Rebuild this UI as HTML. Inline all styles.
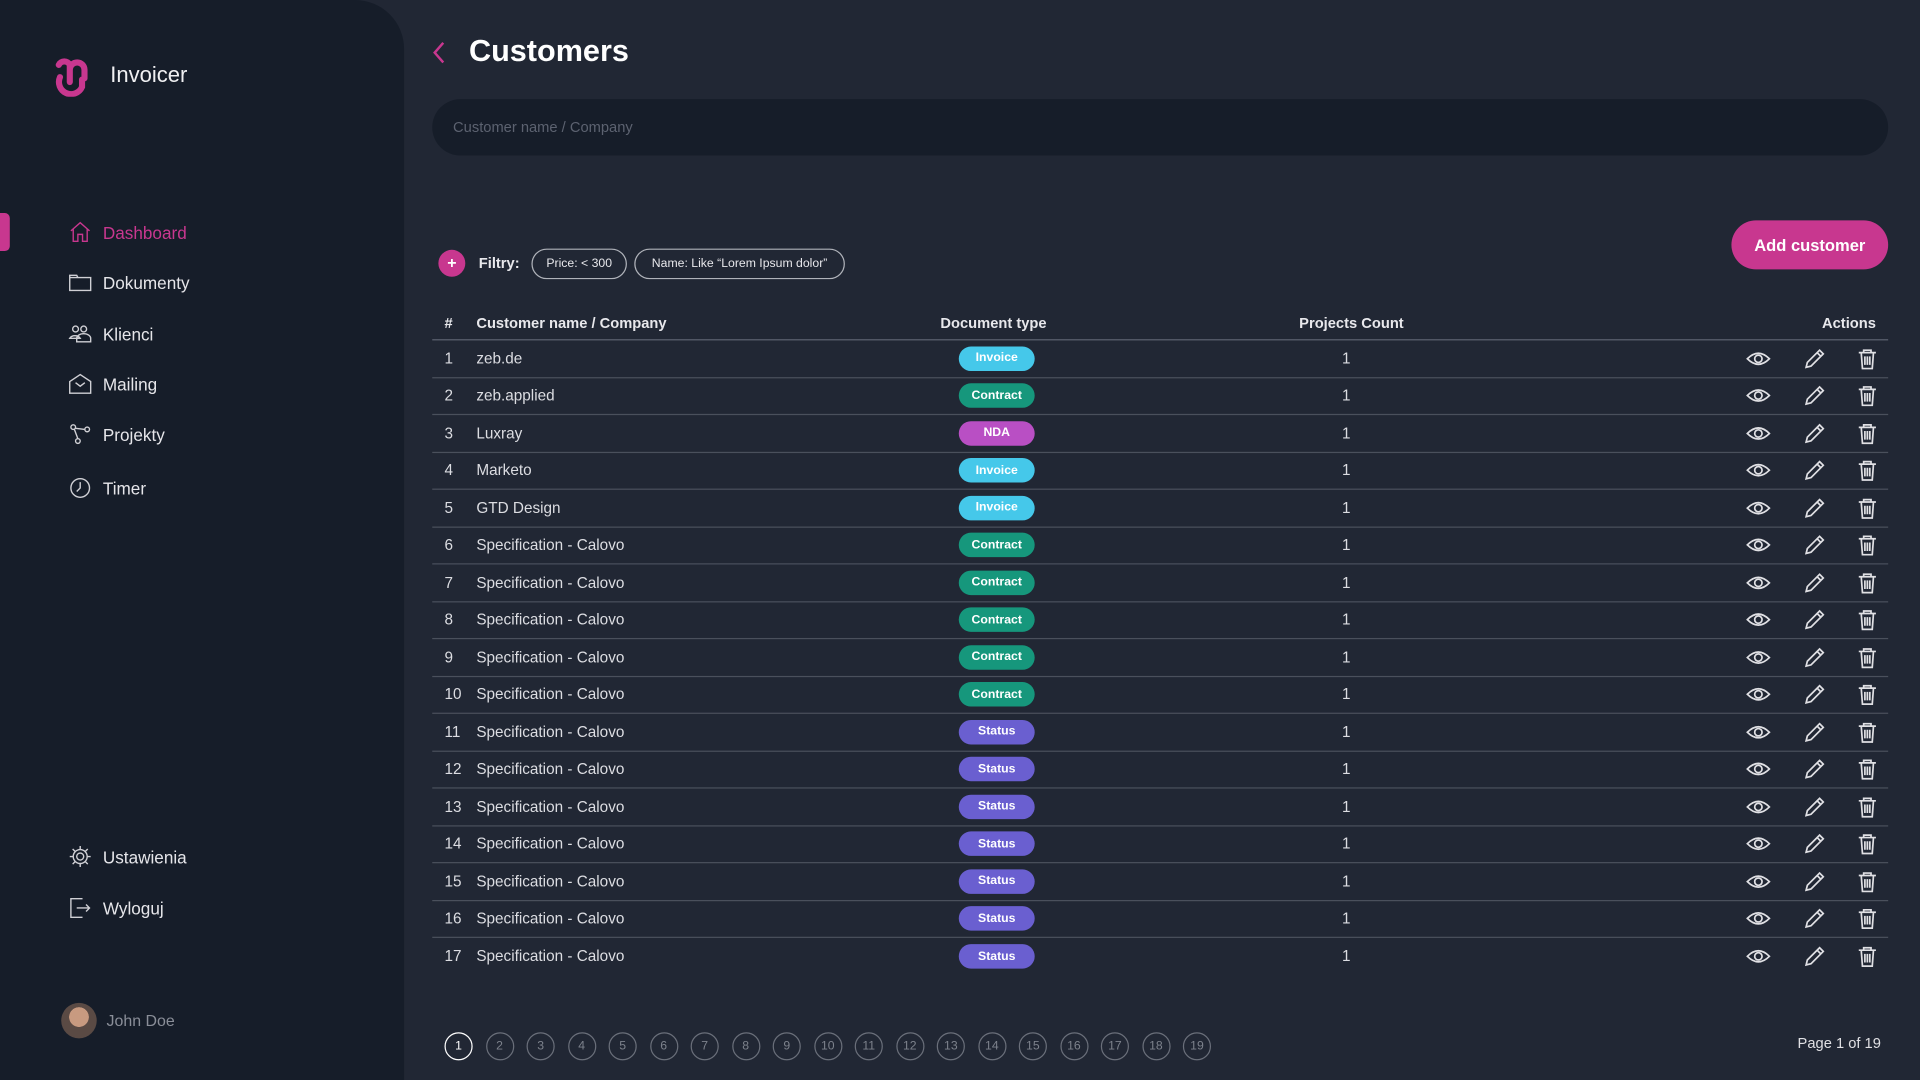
<!DOCTYPE html>
<html><head><meta charset="utf-8"><style>
*{box-sizing:border-box;margin:0;padding:0}
html,body{width:1920px;height:1080px;overflow:hidden;background:#212734}
#w{position:absolute;left:0;top:0;width:1568px;height:882px;transform:scale(1.22449);transform-origin:0 0;font-family:"Liberation Sans",sans-serif;color:#e8e8ec;background:#212734}
.sb{position:absolute;left:0;top:0;width:330px;height:882px;background:#161d29;border-top-right-radius:40px}
.nav{position:absolute;left:56px;display:flex;align-items:center;font-size:14px;color:#e6e6ea}
.nav svg{width:19px;height:19px;margin-right:9px;fill:none;stroke:#d0d0d5;stroke-width:1.2}
.t{position:absolute;left:353px;top:250px;width:1189px}
.hd{height:28px;position:relative;font-size:12px;font-weight:bold;border-bottom:1px solid #5c6270}
.row{height:30.5px;position:relative;border-bottom:1px solid #4a505c;font-size:12.5px;color:#dcdde2}
.row:last-child{border-bottom:none}
.row>span,.hd>span{position:absolute;top:50%;transform:translateY(-50%)}
.row>span.b{left:430px;width:62px;height:20px;border-radius:10px;font-size:10px;font-weight:bold;color:#fff;display:flex;align-items:center;justify-content:center}
.ic{width:20px;height:20px;fill:none;stroke:#e0e0e4;stroke-width:1.4}
.pg{position:absolute;top:843px;width:23px;height:23px;border-radius:50%;border:1px solid #6a6f7a;color:#7d828c;font-size:10px;display:flex;align-items:center;justify-content:center}
</style></head><body><div id="w">
<div class="sb">
<svg style="position:absolute;left:44px;top:45px" width="32" height="34" viewBox="0 0 32 34"><path d="M4 8 a5 5 0 0 1 9 0 V22 M13 12 a6 6 0 0 1 12 0 V19 M5 18 a9 9 0 0 0 18 8 V20" fill="none" stroke="#c8378f" stroke-width="5" stroke-linecap="round"/></svg>
<div style="position:absolute;left:90px;top:51px;font-size:18px;color:#f0f0f2">Invoicer</div>
<div style="position:absolute;left:0;top:174px;width:8px;height:31px;background:#c8378f;border-radius:0 4px 4px 0"></div>
<div class="nav" style="top:180px;color:#c8378f"><svg viewBox="0 0 20 20" style="stroke:#c8378f"><path d="M2 9 L10 2 L18 9 M4 7 V18 H8 V12 H12 V18 H16 V7"/></svg>Dashboard</div>
<div class="nav" style="top:221px"><svg viewBox="0 0 20 20"><path d="M1 4 H7 L8 6 H19 V17 H1 Z M1 6 H19"/></svg>Dokumenty</div>
<div class="nav" style="top:263px"><svg viewBox="0 0 20 20"><circle cx="6" cy="6" r="2.5"/><circle cx="13" cy="6" r="2.5"/><path d="M1 14 a5 4 0 0 1 9 0 Z M7 17 V14 a6 4 0 0 1 12 0 V17 Z"/></svg>Klienci</div>
<div class="nav" style="top:304px"><svg viewBox="0 0 20 20"><path d="M1 8 L10 2 L19 8 V18 H1 Z M6 9 L10 12 L14 9"/></svg>Mailing</div>
<div class="nav" style="top:345px"><svg viewBox="0 0 20 20"><circle cx="4" cy="4" r="2"/><circle cx="16" cy="6" r="2"/><circle cx="8" cy="16" r="2"/><path d="M6 5 L14 6 M5 6 L8 14"/></svg>Projekty</div>
<div class="nav" style="top:389px"><svg viewBox="0 0 20 20"><circle cx="10" cy="10" r="8"/><path d="M10 5 V10 L7 13"/></svg>Timer</div>
<div class="nav" style="top:690px"><svg viewBox="0 0 20 20"><circle cx="10" cy="10" r="3"/><path d="M10 1 V4 M10 16 V19 M1 10 H4 M16 10 H19 M3.5 3.5 L5.5 5.5 M14.5 14.5 L16.5 16.5 M3.5 16.5 L5.5 14.5 M14.5 5.5 L16.5 3.5"/><circle cx="10" cy="10" r="6"/></svg>Ustawienia</div>
<div class="nav" style="top:732px"><svg viewBox="0 0 20 20"><path d="M12 2 H2 V18 H12 M7 10 H18 M15 7 L18 10 L15 13"/></svg>Wyloguj</div>
<div style="position:absolute;left:50px;top:819px;width:29px;height:29px;border-radius:50%;background:radial-gradient(circle at 50% 40%,#c89a80 0 35%,#5a4a44 36% 100%)"></div>
<div style="position:absolute;left:87px;top:826px;font-size:13px;color:#8a8e98">John Doe</div>
</div>
<svg style="position:absolute;left:352px;top:33px" width="14" height="20" viewBox="0 0 14 20"><path d="M10 2 L3 10 L10 18" fill="none" stroke="#c8378f" stroke-width="2"/></svg>
<div style="position:absolute;left:383px;top:28px;font-size:25px;font-weight:bold;color:#fff">Customers</div>
<div style="position:absolute;left:353px;top:81px;width:1189px;height:46px;border-radius:23px;background:#161d29;padding-left:17px;line-height:47px;font-size:12px;color:#5c6270">Customer name / Company</div>
<div style="position:absolute;left:1414px;top:180px;width:128px;height:40px;border-radius:20px;background:#c8378f;color:#fff;font-weight:bold;font-size:13.5px;text-align:center;line-height:41px">Add customer</div>
<div style="position:absolute;left:358px;top:204px;width:22px;height:22px;border-radius:50%;background:#c8378f;color:#fff;text-align:center;line-height:21px;font-weight:bold;font-size:13px">+</div>
<div style="position:absolute;left:391px;top:208px;font-size:12px;font-weight:bold">Filtry:</div>
<div style="position:absolute;left:434px;top:203px;height:25px;width:78px;border:1px solid #b0b3ba;border-radius:13px;font-size:10px;text-align:center;line-height:24px">Price: &lt; 300</div>
<div style="position:absolute;left:518px;top:203px;height:25px;width:172px;border:1px solid #b0b3ba;border-radius:13px;font-size:10px;text-align:center;line-height:24px">Name: Like “Lorem Ipsum dolor”</div>
<div class="t">
<div class="hd"><span style="left:10px">#</span><span style="left:36px">Customer name / Company</span><span style="left:415px">Document type</span><span style="left:708px">Projects Count</span><span style="right:10px">Actions</span></div>
<div id="rows"></div>
</div>
<div id="pgs"></div>
<div style="position:absolute;left:1468px;top:845px;font-size:12px;color:#e0e0e4">Page 1 of 19</div>
</div>
<script>
var d=[["zeb.de","Invoice"],["zeb.applied","Contract"],["Luxray","NDA"],["Marketo","Invoice"],["GTD Design","Invoice"]];
for(var i=0;i<5;i++)d.push(["Specification - Calovo","Contract"]);
for(var i=0;i<7;i++)d.push(["Specification - Calovo","Status"]);
var c={Invoice:"#45c8ea",Contract:"#16977c",NDA:"#b94fc4",Status:"#6a5fd0"};
var eye='<svg class="ic" viewBox="0 0 20 20" style="position:absolute;left:1072px;top:50%;transform:translateY(-50%);width:22px"><path d="M1 10 Q10 1 19 10 Q10 19 1 10 Z"/><circle cx="10" cy="10" r="3"/></svg>';
var pen='<svg class="ic" viewBox="0 0 20 20" style="position:absolute;left:1119px;top:50%;transform:translateY(-50%)"><path d="M3 17 L4 13 L14 3 L17 6 L7 16 Z M12 5 L15 8"/></svg>';
var bin='<svg class="ic" viewBox="0 0 20 20" style="position:absolute;left:1162px;top:50%;transform:translateY(-50%)"><path d="M3 5 H17 M7 5 V3 H13 V5 M5 5 L6 18 H14 L15 5 M8 8 V15 M10 8 V15 M12 8 V15"/></svg>';
var h="";d.forEach(function(r,i){h+='<div class="row"><span style="left:10px">'+(i+1)+'</span><span style="left:36px">'+r[0]+'</span><span class="b" style="background:'+c[r[1]]+'">'+r[1]+'</span><span style="left:743px">1</span>'+eye+pen+bin+'</div>'});
document.getElementById("rows").innerHTML=h;
var p="";for(var i=1;i<=19;i++)p+='<div class="pg" style="left:'+(363+(i-1)*33.5)+'px;'+(i==1?'border-color:#fff;color:#fff':'')+'">'+i+'</div>';
document.getElementById("pgs").innerHTML=p;
</script>
</body></html>
